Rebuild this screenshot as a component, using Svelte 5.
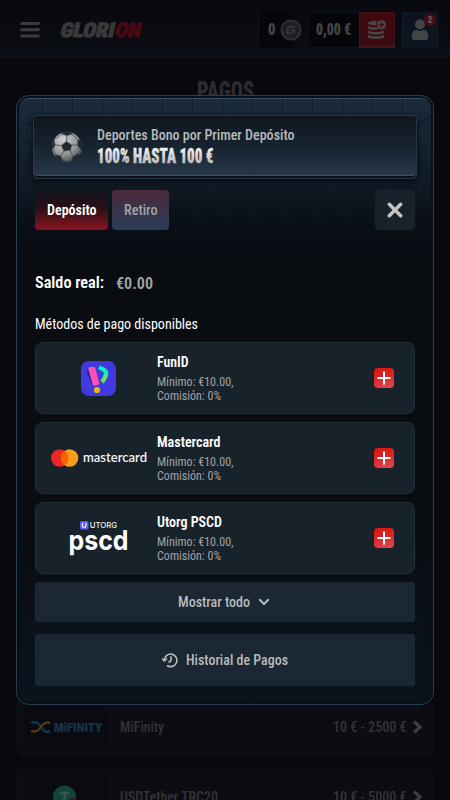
<script>
  const methods = [
    { id: 'funid', name: 'FunID', nameWidth: 31.5 },
    { id: 'mastercard', name: 'Mastercard', nameWidth: 63.5 },
    { id: 'utorg', name: 'Utorg PSCD', nameWidth: 65 }
  ];
</script>

{#snippet label(text, width, size = 14, weight = 500, tone = 'soft')}
  <svg class="label {tone}" {width} height={size + 4} aria-label={text}>
    <text x="0" y={size} font-size={size} font-weight={weight} textLength={width} lengthAdjust="spacingAndGlyphs">{text}</text>
  </svg>
{/snippet}

<div class="page">
  <header>
    <svg class="burger" width="22" height="18" viewBox="0 0 22 18">
      <path d="M2 0H21L20 3H1ZM2 6.300H21L20 9.300H1ZM2 12.600H21L20 15.600H1Z" />
    </svg>
    <svg class="brand" width="84" height="20" viewBox="0 0 84 20">
      <g transform="skewX(-12)" font-size="20" font-weight="900" stroke-width="1">
        <text x="3" y="17" textLength="54" lengthAdjust="spacingAndGlyphs" fill="#39393c" stroke="#39393c">GLORI</text>
        <text x="57.500" y="17" textLength="26" lengthAdjust="spacingAndGlyphs" fill="#470a14" stroke="#470a14">ON</text>
      </g>
    </svg>
    <div class="points">
      {@render label('0', 7.5, 17, 900, 'dim')}
      <svg width="22" height="22" viewBox="0 0 22 22">
        <circle cx="11" cy="11" r="9.600" fill="#1c1f23" stroke="#303338" stroke-width="1.800" />
        <path d="M14.500 7.800H9L7.600 9.200V14.300H13L14.200 13V11.200H11" fill="none" stroke="#37393e" stroke-width="1.800" />
      </svg>
    </div>
    <div class="wallet">
      <div class="amount">{@render label('0,00 €', 35, 17, 900, 'dim')}</div>
      <div class="cash">
        <svg width="20" height="20" viewBox="0 0 20 20" fill="#4a4547">
          <path d="M1 2.500Q5 0 10 1Q8.500 3 9.500 5Q4 6 1 4ZM1 6Q5 8 10 7L12 9Q5 11 1 8.500ZM1 10.500Q8 13.500 17 10.500V13Q9 16 1 13ZM1 15Q9 18 17 15V17.500Q9 20.500 1 17.500Z" />
          <circle cx="14.500" cy="4.800" r="4.600" />
          <path d="M14.500 2.300V7.300M12 4.800H17" stroke="#4e0b12" stroke-width="1.500" />
        </svg>
      </div>
    </div>
    <div class="user">
      <svg width="18" height="22" viewBox="0 0 18 22" fill="#434548">
        <circle cx="9" cy="5.500" r="5" />
        <path d="M1 16Q1 11 6 11Q9 13 12 11Q17 11 17 16V19Q17 21 14.500 21H3.500Q1 21 1 19Z" />
      </svg>
      <span class="badge">2</span>
    </div>
  </header>

  <main>
    <svg class="title" width="57" height="26" viewBox="0 0 57 26">
      <text x="0" y="20" font-size="25" font-weight="900" textLength="57" lengthAdjust="spacingAndGlyphs" fill="#2b2b30">PAGOS</text>
    </svg>
    <div class="rows">
      <div class="row">
        <div class="thumb">
          <svg width="84" height="42" viewBox="0 0 84 42">
            <path d="M7 17Q13 14 17 21T26 25" stroke="#153a50" stroke-width="2.200" fill="none" />
            <path d="M7 25Q13 27 17 21T26 17" stroke="#514016" stroke-width="2.200" fill="none" />
            <text x="30" y="25.500" font-size="12" font-weight="900" textLength="48" lengthAdjust="spacingAndGlyphs" fill="#143449">MiFINITY</text>
          </svg>
        </div>
        {@render label('MiFinity', 44, 14, 500, 'faint')}
        <div class="range">
          {@render label('10 € - 2500 €', 73.5, 14, 500, 'faint')}
          <svg width="12" height="14" viewBox="0 0 12 14"><path d="M2 1.500L8 7L2 12.500" stroke="#3d3d41" stroke-width="3.200" fill="none" /></svg>
        </div>
      </div>
      <div class="row">
        <div class="thumb">
          <svg width="84" height="42" viewBox="0 0 84 42">
            <circle cx="40.500" cy="21" r="11.500" fill="#14443d" />
            <path d="M35.500 17H45.500M40.500 17V29" stroke="#3a5651" stroke-width="2.500" />
            <circle cx="49" cy="28" r="6" fill="#4b1117" />
          </svg>
        </div>
        {@render label('USDTether TRC20', 98, 14, 500, 'faint')}
        <div class="range">
          {@render label('10 € - 5000 €', 73.5, 14, 500, 'faint')}
          <svg width="12" height="14" viewBox="0 0 12 14"><path d="M2 1.500L8 7L2 12.500" stroke="#3d3d41" stroke-width="3.200" fill="none" /></svg>
        </div>
      </div>
    </div>
  </main>

  <section class="modal">
    <svg class="hexes" width="416" height="150" viewBox="17 96 416 150">
      <defs>
        <pattern id="hex" width="30" height="52" patternUnits="userSpaceOnUse" x="13" y="95">
          <path d="M0 0V17L15 26L30 17V0M15 26V43L0 52M15 43L30 52" fill="none" stroke="#0b141d" stroke-width="1.500" />
          <path d="M1 0V17L15.500 25M16 27V43L29 51" fill="none" stroke="#2d4456" stroke-width=".6" />
        </pattern>
        <linearGradient id="fade" x1="0" y1="0" x2="0" y2="1">
          <stop offset="0" stop-color="#fff" stop-opacity=".7" />
          <stop offset=".5" stop-color="#fff" stop-opacity=".35" />
          <stop offset="1" stop-color="#fff" stop-opacity="0" />
        </linearGradient>
        <mask id="hexmask"><rect x="17" y="96" width="416" height="150" fill="url(#fade)" /></mask>
      </defs>
      <rect x="17" y="96" width="416" height="150" fill="url(#hex)" mask="url(#hexmask)" />
    </svg>
    <div class="inner">
      <div class="bonus">
        <svg width="32" height="32" viewBox="0 0 32 32">
          <defs>
            <radialGradient id="ball" cx=".35" cy=".25" r=".85">
              <stop offset="0" stop-color="#cfcfcf" /><stop offset=".6" stop-color="#929495" /><stop offset="1" stop-color="#3c4042" />
            </radialGradient>
            <clipPath id="ballclip"><circle cx="16" cy="16" r="15" /></clipPath>
          </defs>
          <circle cx="16" cy="16" r="15" fill="url(#ball)" />
          <g clip-path="url(#ballclip)" fill="#20282b" stroke="#42494c" stroke-width=".8">
            <path d="M10.500 14.500L15.500 10.500L20.500 14L19.500 19L13 20ZM10 -1L21 -1L21 3L16 4.500L11 3ZM0 10L3 9L4 14L2 18L-2 15ZM27 9L31 8L34 18L30 19L26.500 14ZM5 24L9.500 25L12 30L8 33L2 27ZM22 26L26 23L30 23L25 32L20 31Z" />
            <path d="M15.500 10.500L16 4.500M20.500 14L26.500 14M19.500 19L22 26M13 20L9.500 25M10.500 14.500L4 14M3 9L11 3M21 3L27 9M2 18L5 24M12 30H20M30 19L26 23" fill="none" />
          </g>
        </svg>
        <div class="bonus-copy">
          {@render label('Deportes Bono por Primer Depósito', 197.5, 14, 500, 'soft')}
          <svg width="117" height="22" viewBox="0 0 117 22">
            <defs><linearGradient id="steel" x1="0" y1="0" x2="0" y2="1"><stop offset=".2" stop-color="#eee" /><stop offset="1" stop-color="#aaa" /></linearGradient></defs>
            <text x="0" y="18" font-size="19.500" font-weight="900" textLength="116.500" lengthAdjust="spacingAndGlyphs" fill="url(#steel)" stroke="url(#steel)" stroke-width=".4">100% HASTA 100 €</text>
          </svg>
        </div>
      </div>

      <div class="tabs">
        <button class="tab active">{@render label('Depósito', 49.5, 14, 600, 'bright')}</button>
        <button class="tab">{@render label('Retiro', 33.5, 14, 500, 'muted')}</button>
        <button class="close" aria-label="Cerrar">
          <svg width="16" height="16" viewBox="0 0 16 16"><path d="M2.300 2.300L13.700 13.700M13.700 2.300L2.300 13.700" stroke="#c4c5c6" stroke-width="3.400" stroke-linecap="round" /></svg>
        </button>
      </div>

      <div class="balance">
        {@render label('Saldo real:', 69, 16, 600, 'bright')}
        <div class="money">{@render label('€0.00', 37, 16, 600, 'muted')}</div>
      </div>

      <div class="heading">{@render label('Métodos de pago disponibles', 163, 14, 400, 'bright')}</div>

      <div class="methods">
        {#each methods as m}
          <div class="method">
            <svg class="logo" width="96" height="40" viewBox="0 0 96 40">
              {#if m.id === 'funid'}
                <defs><linearGradient id="mint" x1="0" y1="0" x2="0" y2="1"><stop offset=".3" stop-color="#08f5b8" /><stop offset="1" stop-color="#83e342" /></linearGradient></defs>
                <rect x="30" y="3" width="35" height="35" rx="8" fill="#403adf" />
                <path d="M39.500 13L43.500 24" stroke="#252399" stroke-width="7" stroke-linecap="round" />
                <path d="M38.500 10.500L43 10L47 25.500L43 26.500Z" fill="#ff50b5" stroke="#ff50b5" stroke-width="2.600" stroke-linejoin="round" />
                <path d="M48 9.500Q56.500 12 54.800 17Q54 20.500 51 24" stroke="url(#mint)" stroke-width="4.400" stroke-linejoin="round" fill="none" />
                <circle cx="46" cy="32" r="3.100" fill="#edb80d" />
              {:else if m.id === 'mastercard'}
                <circle cx="8.700" cy="20" r="8.700" fill="#eb2623" />
                <circle cx="18.600" cy="20" r="8.700" fill="#f79e1b" />
                <path d="M13.650 12.850A8.700 8.700 0 0 1 13.650 27.150A8.700 8.700 0 0 1 13.650 12.850Z" fill="#ff6100" />
                <text class="lato" x="32" y="23.700" font-size="12.500" font-weight="600" textLength="64" lengthAdjust="spacingAndGlyphs" fill="#f4f4f5">mastercard</text>
              {:else}
                <rect x="29" y="3" width="8.500" height="8.500" rx="1.500" fill="#605eee" />
                <path d="M31.500 5V8Q31.500 9.500 33.200 9.500T35 8V5" stroke="#fff" stroke-width="1.200" fill="none" />
                <text class="inter" x="38.700" y="10.200" font-size="8" font-weight="500" textLength="27.500" lengthAdjust="spacingAndGlyphs" fill="#eee">UTORG</text>
                <text class="inter" x="17.500" y="31.800" font-size="27.500" font-weight="700" textLength="60" lengthAdjust="spacingAndGlyphs" fill="#fff">pscd</text>
              {/if}
            </svg>
            <div class="details">
              {@render label(m.name, m.nameWidth, 14, 600, 'bright')}
              <div class="terms">
                {@render label('Mínimo: €10.00,', 76.5, 12, 400, 'muted')}
                {@render label('Comisión: 0%', 64, 12, 400, 'muted')}
              </div>
            </div>
            <button class="add" aria-label="Añadir">
              <svg width="14" height="14" viewBox="0 0 14 14"><path d="M7 .5V13.500M.5 7H13.500" stroke="#fff" stroke-width="2" /></svg>
            </button>
          </div>
        {/each}
      </div>

      <button class="wide more">
        {@render label('Mostrar todo', 72, 14, 500, 'soft')}
        <svg width="12" height="8" viewBox="0 0 12 8"><path d="M1.300 1.300L6 6L10.700 1.300" stroke="#b9bbbd" stroke-width="2" fill="none" /></svg>
      </button>
      <button class="wide history">
        <svg width="16" height="16" viewBox="0 0 16 16" fill="none" stroke="#b9bbbd" stroke-width="1.600">
          <path d="M2.300 8.500A6.300 6.300 0 1 1 5 13.500M0 6.500L2.400 8.900L5 6.500M9 4.300V8.700L6.500 10.500" />
        </svg>
        {@render label('Historial de Pagos', 102, 14, 500, 'soft')}
      </button>
    </div>
  </section>
</div>

<style>
  :global(body) { margin: 0; background: #08080c; }
  * { box-sizing: border-box; }
  svg { display: block; flex: none; }
  button { font: inherit; border: 0; padding: 0; display: flex; align-items: center; justify-content: center; }
  .page { position: relative; height: 800px; overflow: hidden; font-family: "Roboto Condensed", Roboto, "Liberation Sans", sans-serif; font-stretch: 75%; background: #08080d; }
  .label { overflow: visible; }
  .bright { fill: #fff; }
  .soft { fill: #b9babc; }
  .muted { fill: #a3a4a7; }
  .dim { fill: #444447; }
  .faint { fill: #343438; }
  .lato { font-family: Lato, sans-serif; }
  .inter { font-family: Inter, sans-serif; }

  header { height: 58px; padding: 12px 12px 0 19px; display: flex; align-items: flex-start; border-bottom: 1px solid #0d151d; background: linear-gradient(#08090e, #090b11 60%, #0a0f16); }
  .burger { margin-top: 10px; fill: #3b3c40; }
  .brand { margin: 8px 0 0 19px; overflow: visible; }
  .points { margin-left: auto; height: 36px; width: 45px; padding-left: 9px; display: flex; align-items: center; gap: 5px; background: linear-gradient(90deg, #050609 34px, transparent 34px); border-left: 1px solid #0c131a; }
  .wallet { margin-left: 4px; display: flex; height: 36px; border: 1px solid #0c141b; background: #050609; }
  .amount { width: 52px; padding-left: 8px; display: flex; align-items: center; }
  .points .label, .amount .label { margin-top: -3px; }
  .points svg:last-child { margin-top: -1px; margin-left: -1px; }
  .cash { width: 36px; height: 36px; margin: -1px; padding-top: 2px; display: flex; align-items: center; justify-content: center; background: linear-gradient(#3f080e, #3a0a11); border: 1px solid #431015; border-bottom: 3px solid #421718; }
  .user { position: relative; width: 36px; height: 36px; margin-left: 7px; padding: 6px 0 0 8px; background: #0c1420; border: 1px solid #0e1a26; }
  .badge { position: absolute; right: 1px; top: 1px; width: 12px; height: 12px; border-radius: 6px; background: #4a0b12; color: #6a5a5e; font-size: 9px; font-weight: 900; line-height: 12px; text-align: center; }

  main { height: 742px; padding: 22px 16px 0; display: flex; flex-direction: column; align-items: center; background: #08080d; }
  .title { margin-bottom: 593px; }
  .rows { width: 418px; display: flex; flex-direction: column; gap: 14px; }
  .row { height: 56px; display: flex; align-items: center; background: #0c0d13; border: 1px solid #0d1218; border-radius: 7px; }
  .row .label { margin-top: -1px; }
  .thumb { width: 84px; height: 42px; margin: 0 12px 0 7px; background: #0a0b10; border-radius: 5px; display: flex; align-items: center; }
  .range { margin-left: auto; padding-right: 9px; display: flex; align-items: center; gap: 6px; }

  .modal { position: absolute; left: 16px; top: 95px; width: 418px; height: 610px; border: 1px solid #263f50; border-radius: 13px; overflow: hidden; background: linear-gradient(#1b2c3c 0, #172636 30px, #101b25 85px, #0a1017 125px, #090c11 175px, #090d12 430px, #0a141c 610px); box-shadow: inset 0 0 0 2px #090f16, inset 0 3px 0 #335066; }
  .hexes { position: absolute; left: 0; top: 3px; }
  .inner { position: relative; padding: 19px 16px 0; display: flex; flex-direction: column; }
  .bonus { height: 64px; padding-left: 17px; display: flex; align-items: center; background: linear-gradient(#0f151e, #172430 50%, #293a4b); border: 1px solid #263a4a; border-radius: 4px; box-shadow: inset 0 -2px 0 #0a1017, inset 0 -3px 0 #385063, 0 2px 6px #05080b; }
  .bonus-copy { margin-left: 14px; display: flex; flex-direction: column; }
  .bonus-copy .label { margin-top: -1px; margin-bottom: 1px; }
  .tabs { margin: 11px 2px 0; display: flex; gap: 4px; }
  .tab { height: 40px; padding: 0 11.75px; border-radius: 4px; background: linear-gradient(#4c2a3a, #293c59); }
  .active { background: linear-gradient(#11131b, #281018 45%, #8c1420); }
  .close { width: 40px; height: 40px; margin-left: auto; border-radius: 4px; background: #17222b; }
  .balance { margin: 42px 2px 0; display: flex; gap: 12px; }
  .money { padding-top: 1px; }
  .heading { margin: 22px 2px 0; }
  .methods { margin: 9px 2px 0; display: flex; flex-direction: column; gap: 8px; }
  .method { height: 72px; padding: 0 20px 0 15px; display: flex; align-items: center; background: #18222a; border: 1px solid #24323c; border-radius: 8px; }
  .details { margin: -2px 0 0 10px; display: flex; flex-direction: column; gap: 3px; }
  .terms { display: flex; flex-direction: column; }
  .terms .label { height: 14px; }
  .add { width: 20px; height: 20px; margin-left: auto; border-radius: 4px; background: linear-gradient(165deg, #d61912 15%, #dd292a 50%, #e04c52); }
  .wide { margin: 8px 2px 0; border-radius: 3px; background: #1b2732; }
  .wide .label { margin-top: 0; }
  .more { height: 40px; gap: 8px; padding-right: 2px; }
  .history { height: 52px; margin-top: 12px; gap: 8px; }
</style>
